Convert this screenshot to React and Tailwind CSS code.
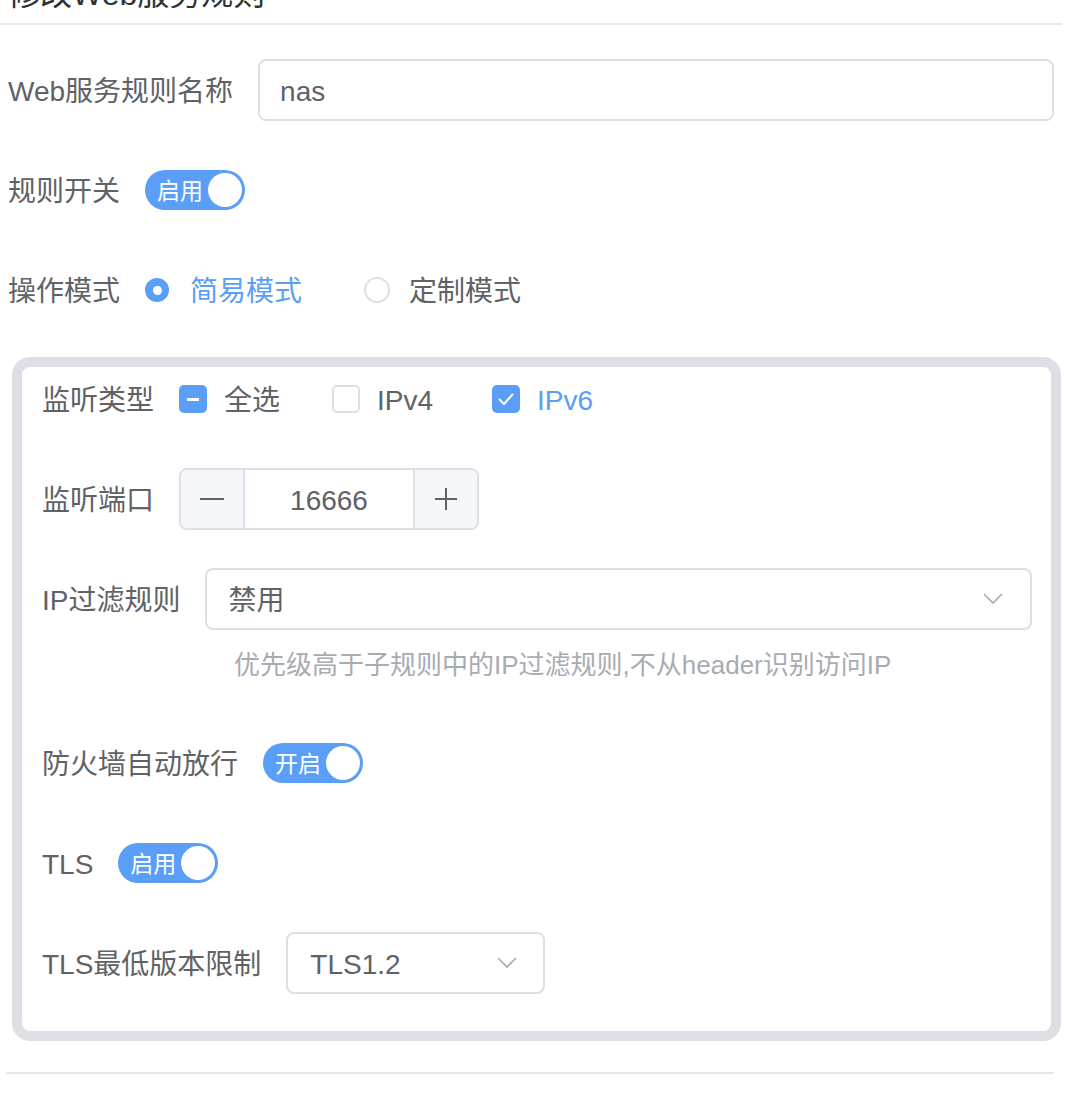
import React from "react";

const BLUE = "bg-[#5a9ef8]";

function Toggle({ text }) {
  return (
    <div className={`relative flex h-[40px] w-[100px] items-center rounded-full ${BLUE} pl-[12px]`}>
      <span className="relative top-[1px] text-[23px] leading-none text-white">{text}</span>
      <span className="absolute right-[3px] top-[3px] h-[34px] w-[34px] rounded-full bg-white" />
    </div>
  );
}

function Chevron() {
  return (
    <svg width="22" height="14" viewBox="0 0 22 14" fill="none">
      <path d="M2 2 L11 11 L20 2" stroke="#a8abb2" strokeWidth="1.6" />
    </svg>
  );
}

function Row({ label, children, className = "" }) {
  return (
    <div className={`flex h-[64px] items-center ${className}`}>
      <span className="relative top-[2px] mr-[25px] whitespace-nowrap text-[28px] text-[#606266]">{label}</span>
      {children}
    </div>
  );
}

function Check({ state, label, active, className = "" }) {
  return (
    <div className={`flex items-center ${className}`}>
      {state === "empty" ? (
        <span className="h-[28px] w-[28px] rounded-[5px] border-2 border-[#dcdfe6] bg-white" />
      ) : (
        <span className={`flex h-[28px] w-[28px] items-center justify-center rounded-[5px] ${BLUE}`}>
          {state === "half" ? (
            <span className="h-[3px] w-[12px] bg-white" />
          ) : (
            <svg width="18" height="14" viewBox="0 0 18 14" fill="none">
              <path d="M2 7 L7 12 L16 2" stroke="white" strokeWidth="2" />
            </svg>
          )}
        </span>
      )}
      <span className={`relative top-[2px] ml-[17px] text-[28px] ${active ? "text-[#5a9ef8]" : "text-[#606266]"}`}>
        {label}
      </span>
    </div>
  );
}

export default function App() {
  return (
    <div className="w-[1068px] bg-white font-['Liberation_Sans','Noto_Sans_CJK_SC',sans-serif]">
      <div className="mr-[6px] flex h-[25px] overflow-hidden border-b-2 border-[#e4e7ed] pl-[8px]">
        <span className="-mt-[22px] text-[32px] leading-[32px] text-[#303133]">修改Web服务规则</span>
      </div>

      <div className="mt-[33px] pl-[8px] pr-[14px]">
        <Row label="Web服务规则名称">
          <div className="flex h-[62px] flex-1 items-center rounded-[8px] border-2 border-[#dcdfe6] pl-[20px] text-[28px] text-[#606266]">
            <span className="relative top-[2px]">nas</span>
          </div>
        </Row>
        <Row label="规则开关" className="mt-[36px]">
          <Toggle text="启用" />
        </Row>
        <Row label="操作模式" className="mt-[36px]">
          <div className="flex items-center">
            <span className={`flex h-[24px] w-[24px] items-center justify-center rounded-full ${BLUE}`}>
              <span className="h-[9px] w-[9px] rounded-full bg-white" />
            </span>
            <span className="relative top-[2px] ml-[21px] text-[28px] text-[#5a9ef8]">简易模式</span>
          </div>
          <div className="ml-[62px] flex items-center">
            <span className="h-[26px] w-[26px] rounded-full border-2 border-[#dcdfe6]" />
            <span className="relative top-[2px] ml-[19px] text-[28px] text-[#606266]">定制模式</span>
          </div>
        </Row>
      </div>

      <div className="ml-[12px] mt-[35px] w-[1049px] rounded-[18px] border-[10px] border-[#dedfe5] pb-[36px] pl-[20px] pr-[19px]">
        <Row label="监听类型">
          <Check state="half" label="全选" className="w-[153px]" />
          <Check state="empty" label="IPv4" className="w-[160px]" />
          <Check state="checked" label="IPv6" active />
        </Row>
        <Row label="监听端口" className="mt-[36px]">
          <div className="flex h-[62px] w-[300px] rounded-[8px] border-2 border-[#dcdfe6]">
            <div className="flex w-[64px] items-center justify-center rounded-l-[6px] border-r-2 border-[#dcdfe6] bg-[#f5f7fa]">
              <span className="h-[2px] w-[24px] bg-[#606266]" />
            </div>
            <div className="flex flex-1 items-center justify-center text-[28px] text-[#606266]">
              <span className="relative top-[2px]">16666</span>
            </div>
            <div className="relative flex w-[64px] items-center justify-center rounded-r-[6px] border-l-2 border-[#dcdfe6] bg-[#f5f7fa]">
              <span className="h-[2px] w-[22px] bg-[#606266]" />
              <span className="absolute h-[22px] w-[2px] bg-[#606266]" />
            </div>
          </div>
        </Row>
        <Row label="IP过滤规则" className="mt-[36px]">
          <div className="flex h-[62px] flex-1 items-center justify-between rounded-[8px] border-2 border-[#dcdfe6] pl-[21px] pr-[26px] text-[28px] text-[#606266]">
            <span className="relative top-[2px]">禁用</span>
            <Chevron />
          </div>
        </Row>
        <div className="flex h-[64px] items-center pl-[192px] text-[26px] text-[#a8abb2]">
          <span className="relative top-[2px]">优先级高于子规则中的IP过滤规则,不从header识别访问IP</span>
        </div>
        <Row label="防火墙自动放行" className="mt-[36px]">
          <Toggle text="开启" />
        </Row>
        <Row label="TLS" className="mt-[36px]">
          <Toggle text="启用" />
        </Row>
        <Row label="TLS最低版本限制" className="mt-[36px]">
          <div className="flex h-[62px] w-[259px] items-center justify-between rounded-[8px] border-2 border-[#dcdfe6] pl-[22px] pr-[25px] text-[28px] text-[#606266]">
            <span className="relative top-[2px]">TLS1.2</span>
            <Chevron />
          </div>
        </Row>
      </div>

      <div className="ml-[6px] mt-[31px] h-[2px] w-[1048px] bg-[#e4e7ed]" />
    </div>
  );
}
